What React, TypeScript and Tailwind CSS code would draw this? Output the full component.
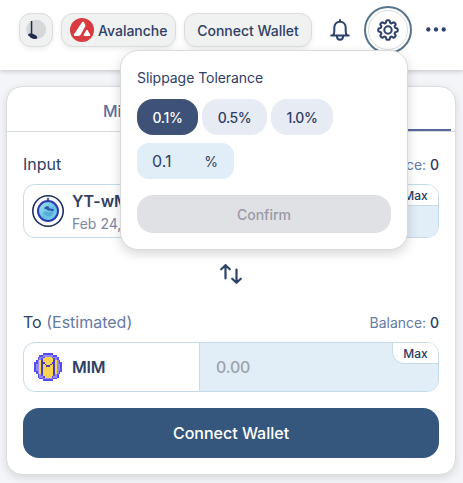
import React from "react";

function ThemeIcon() {
  return (
    <svg width="22" height="22" viewBox="0 0 22 22">
      <ellipse cx="11.200" cy="10.500" rx="10" ry="9.700" fill="#d5d7d8" />
      <path d="M5.800 2h1.500v14H5.800z" fill="#1f2a4c" />
      <path d="M2.800 15.800c1-1.600 3.500-1.600 5.500-.8 2 .8 4 2 4.100 3.900-1.500 1.600-4.200 1.200-6 .2-.9-.5-1.400-1-1.500-1.700-.8-.2-1.700-.7-2.100-1.600Z" fill="#1f2a4c" />
    </svg>
  );
}

function AvalancheIcon() {
  return (
    <svg width="24" height="24" viewBox="0 0 24 24">
      <circle cx="12" cy="12" r="12" fill="#d93b40" />
      <path
        d="M12.100 4.200c.5-.9 1.300-.9 1.800 0l1.200 2.200c.4.700.4 1.500 0 2.200l-4.300 7.900c-.5.900-1.200 1.400-2.200 1.400H5c-1.100 0-1.500-.7-1-1.600Z"
        fill="#fff"
      />
      <path d="M16.100 12.500c.5-.9 1.200-.9 1.700 0l2.300 3.900c.5.900.1 1.500-.9 1.500h-4.500c-1 0-1.400-.6-.9-1.500Z" fill="#fff" />
    </svg>
  );
}

function BellIcon() {
  return (
    <svg width="22" height="24" viewBox="0 0 22 24" fill="none" stroke="#2d426b" strokeWidth="2" strokeLinecap="round" strokeLinejoin="round">
      <path d="M11 2v1.500M2.200 17.500h17.600M4 17.500c1-1.400 1.300-2.600 1.300-4.300V9.700c0-3.600 2.300-5.900 5.700-5.900s5.700 2.300 5.700 5.900v3.500c0 1.700.3 2.900 1.300 4.300M7.900 18c0 2.200 1.300 3.700 3.100 3.700s3.100-1.500 3.100-3.700" />
    </svg>
  );
}

function GearIcon() {
  return (
    <svg width="26" height="26" viewBox="0 0 24 24" fill="none" stroke="#2d426b" strokeWidth="1.900" strokeLinejoin="round" className="shrink-0">
      <path d="M10.340 3.940c.09-.542.560-.940 1.110-.940h1.100c.550 0 1.020.398 1.110.940l.149.894c.070.424.384.764.780.930.398.164.855.142 1.205-.108l.737-.527a1.125 1.125 0 0 1 1.450.120l.773.774c.390.389.440 1.002.120 1.450l-.527.737c-.250.350-.272.806-.107 1.204.165.397.505.710.930.780l.893.150c.543.090.940.559.940 1.109v1.094c0 .550-.397 1.020-.940 1.110l-.894.149c-.424.070-.764.383-.929.780-.165.398-.143.854.107 1.204l.527.738c.320.447.269 1.060-.120 1.450l-.774.773a1.125 1.125 0 0 1-1.449.120l-.738-.527c-.350-.250-.806-.272-1.203-.107-.398.165-.710.505-.781.929l-.149.894c-.090.542-.560.940-1.110.940h-1.094c-.550 0-1.019-.398-1.110-.940l-.148-.894c-.071-.424-.384-.764-.781-.930-.398-.164-.854-.142-1.204.108l-.738.527c-.447.320-1.060.269-1.450-.120l-.773-.774a1.125 1.125 0 0 1-.120-1.450l.527-.737c.250-.350.272-.806.108-1.204-.165-.397-.506-.710-.930-.780l-.894-.150c-.542-.090-.940-.560-.940-1.109v-1.094c0-.550.398-1.020.940-1.110l.894-.149c.424-.070.765-.383.930-.780.165-.398.143-.854-.108-1.204l-.526-.738a1.125 1.125 0 0 1 .120-1.450l.773-.773a1.125 1.125 0 0 1 1.450-.120l.737.527c.350.250.807.272 1.204.107.397-.165.710-.505.780-.929Z" />
      <circle cx="12" cy="12" r="3.400" />
    </svg>
  );
}

function MoreIcon() {
  return (
    <svg width="20" height="5" viewBox="0 0 20 5" fill="#2d426b">
      <circle cx="2.300" cy="2.500" r="2.150" />
      <circle cx="10" cy="2.500" r="2.150" />
      <circle cx="17.700" cy="2.500" r="2.150" />
    </svg>
  );
}

function YieldTokenIcon() {
  return (
    <svg width="32" height="32" viewBox="0 0 32 32">
      <defs>
        <linearGradient id="globe" x1="0" y1="0" x2="1" y2="1">
          <stop offset="0" stopColor="#a3edf6" />
          <stop offset=".55" stopColor="#69bce4" />
          <stop offset="1" stopColor="#72dbed" />
        </linearGradient>
      </defs>
      <circle cx="16" cy="16" r="15.200" fill="#fff" stroke="#1c2e5c" strokeWidth="1.600" />
      <circle cx="16" cy="16" r="10" fill="url(#globe)" stroke="#2b3cb4" strokeWidth="2" />
      <path d="M16 2.500v4M14.700 4h2.600" stroke="#273773" strokeWidth="1" />
      <path d="M12.500 12.500c1-1 2.500-1.500 4-1.200l1 2.200 4.200.5c.6 1-.2 2.200-1.200 2.200l-3.300-1-.8.6-2-1.500-1.900-.4Z" fill="#2d56a9" />
      <path d="m10.500 18 3.500-1.500 2.500 1 4.500-1c0 3-2 5-5 5Z" fill="#58aada" />
    </svg>
  );
}

const COIN_ROWS = [
  ".....bbbbbb.....",
  "...bbllllllbb...",
  "..bllbyyyybllb..",
  "..blbyyyyyyblb..",
  ".blymyyyyyymylb.",
  "bblymmyyyymmylbb",
  "bllymymyymymyllb",
  "bllymyymmyymyllb",
  "bllymyyyyyymyllb",
  "bllymyyyyyymyllb",
  "bblymyyyyyymylbb",
  ".blymyyyyyymylb.",
  "..blbyyyyyyblb..",
  "..bllbyyyybllb..",
  "...bbllllllbb...",
  ".....bbbbbb.....",
];

const COIN_COLORS: Record<string, string> = { b: "#554cf5", l: "#928bf0", y: "#f8d44f", m: "#443cc8" };

function MimIcon() {
  return (
    <svg width="28" height="28" viewBox="0 0 16 16" shapeRendering="crispEdges">
      {COIN_ROWS.map((row, y) =>
        row.split("").map((c, x) =>
          COIN_COLORS[c] ? <rect key={`${x}-${y}`} x={x} y={y} width="1" height="1" fill={COIN_COLORS[c]} /> : null
        )
      )}
    </svg>
  );
}

function SwapIcon() {
  return (
    <svg width="24" height="22" viewBox="0 0 24 22" fill="none" stroke="#2d426b" strokeWidth="2.200" strokeLinecap="round" strokeLinejoin="round">
      <path d="M6.500 15.500V2.200M2.200 6.300l4.300-4.100 4.300 4.100M17.500 6.500v13.300M13.200 15.700l4.300 4.100 4.300-4.100" />
    </svg>
  );
}

function MaxButton() {
  return (
    <button className="absolute top-0 right-0 flex h-[21px] w-[46px] items-center justify-center rounded-bl-xl border-b border-l border-[#c6dbe9] bg-white pt-px text-[12px] font-medium text-[#2b3a5c]">
      Max
    </button>
  );
}

function Balance() {
  return (
    <span className="pt-px text-[14px] leading-5 tracking-[-0.03px] text-[#647aa4]">
      Balance: <span className="font-medium text-[#2b3a5c]">0</span>
    </span>
  );
}

function SlippagePopover() {
  return (
    <div className="absolute top-[50px] left-[120px] z-20 flex h-[200px] w-[288px] flex-col rounded-[18px] border border-[#d9dadd] bg-white px-4 pt-[17px] shadow-[0_4px_12px_rgba(0,0,0,0.16)]">
      <div className="text-[14px] leading-5 tracking-[-0.05px]">Slippage Tolerance</div>
      <div className="mt-[11px] flex gap-1 text-[14px] font-medium tracking-[-0.4px]">
        <button className="h-9 w-[61px] rounded-2xl bg-[#3e5177] text-white">0.1%</button>
        <button className="h-9 w-[65px] rounded-2xl bg-[#e7ebf3]">0.5%</button>
        <button className="h-9 w-[62px] rounded-2xl bg-[#e7ebf3]">1.0%</button>
      </div>
      <div className="mt-2 flex h-9 w-[97px] items-center justify-between rounded-xl bg-[#e1edf7] pr-4 pl-[15px] text-[16px]">
        <span>0.1</span>
        <span className="text-[14px]">%</span>
      </div>
      <button className="mt-4 h-[38px] rounded-2xl bg-[#e0e1e5] text-[14px] font-medium text-[#9899a3]">Confirm</button>
    </div>
  );
}

export default function App() {
  return (
    <div className="relative h-[483px] w-[463px] overflow-hidden bg-[#f3f5f9] font-['Inter',sans-serif] text-[#2f4065]">
      <header className="relative flex h-[70px] items-start bg-white pt-[6px] pl-[19px] shadow-[0_1px_5px_rgba(0,0,0,0.22)]">
        <div className="mt-[7px] flex gap-2 text-[14px] font-medium">
          <button className="flex h-[34px] w-[34px] items-center justify-center rounded-xl border border-[#dadcdd] bg-[#f0f1f1] shadow-[0_2px_5px_rgba(0,0,0,0.08)]">
            <ThemeIcon />
          </button>
          <button className="flex h-[34px] w-[115px] items-center gap-1 rounded-xl border border-[#dadcdd] bg-[#f0f1f1] pl-2 shadow-[0_2px_5px_rgba(0,0,0,0.08)]">
            <AvalancheIcon />
            Avalanche
          </button>
          <button className="h-[34px] w-[128px] rounded-xl border border-[#dadcdd] bg-[#f0f1f1] shadow-[0_2px_5px_rgba(0,0,0,0.08)]">
            Connect Wallet
          </button>
        </div>
        <div className="mt-3 ml-[17px]">
          <BellIcon />
        </div>
        <div className="ml-[13px] flex h-12 w-12 items-center justify-center rounded-full border-2 border-[#56758c] p-[2px]">
          <div className="flex h-full w-full items-center justify-center rounded-full border border-[#dadcdd]">
            <GearIcon />
          </div>
        </div>
        <div className="mt-[21px] ml-[14px] flex h-5">
          <MoreIcon />
        </div>
      </header>
      <SlippagePopover />
      <main className="mt-4 ml-[6px] h-[389px] w-[450px] rounded-2xl border border-[#d9dbdc] bg-white shadow-[0_3px_8px_rgba(0,0,0,0.12)]">
        <div className="flex h-[45px] border-b border-[#d8dce2] px-1 text-[16px] font-medium text-[#5c709f]">
          <div className="flex flex-1 items-center justify-center pt-1 pr-[5px]">Mint</div>
          <div className="flex flex-1 items-center justify-center border-b-2 border-[#56689b] pt-1">Swap</div>
        </div>
        <div className="flex flex-col px-4">
          <div className="mt-[20px] flex h-6 items-center justify-between">
            <span className="text-[16px]">Input</span>
            <Balance />
          </div>
          <div className="relative mt-[8px] flex h-[54px] overflow-hidden rounded-xl border border-[#c6dbe9]">
            <div className="flex w-[176px] items-center gap-2 border-r border-[#c6dbe9] pl-2">
              <YieldTokenIcon />
              <div className="pt-[3px]">
                <div className="text-[16px] leading-[22px] font-semibold whitespace-nowrap">YT-wMEMO</div>
                <div className="text-[14px] leading-[23px] whitespace-nowrap text-[#7b87a3]">Feb 24, 2022</div>
              </div>
            </div>
            <div className="flex-1 bg-[#e1edf7]" />
            <MaxButton />
          </div>
          <div className="mt-[25px] flex h-[22px] justify-center">
            <SwapIcon />
          </div>
          <div className="mt-[25px] flex h-6 items-center justify-between">
            <span className="text-[16px]">
              To <span className="text-[#647aa4]">(Estimated)</span>
            </span>
            <Balance />
          </div>
          <div className="relative mt-[8px] flex h-[50px] overflow-hidden rounded-xl border border-[#c6dbe9]">
            <div className="flex w-[176px] items-center gap-[10px] border-r border-[#c6dbe9] pl-[10px]">
              <MimIcon />
              <span className="text-[16px] font-semibold tracking-[-0.2px]">MIM</span>
            </div>
            <div className="flex flex-1 items-center bg-[#e1edf7] pl-4 text-[16px] font-medium tracking-[-0.2px] text-[#9ea2aa]">0.00</div>
            <MaxButton />
          </div>
          <button className="mt-4 h-[50px] rounded-2xl bg-[#36577d] text-[16px] font-medium text-white">Connect Wallet</button>
        </div>
      </main>
    </div>
  );
}
